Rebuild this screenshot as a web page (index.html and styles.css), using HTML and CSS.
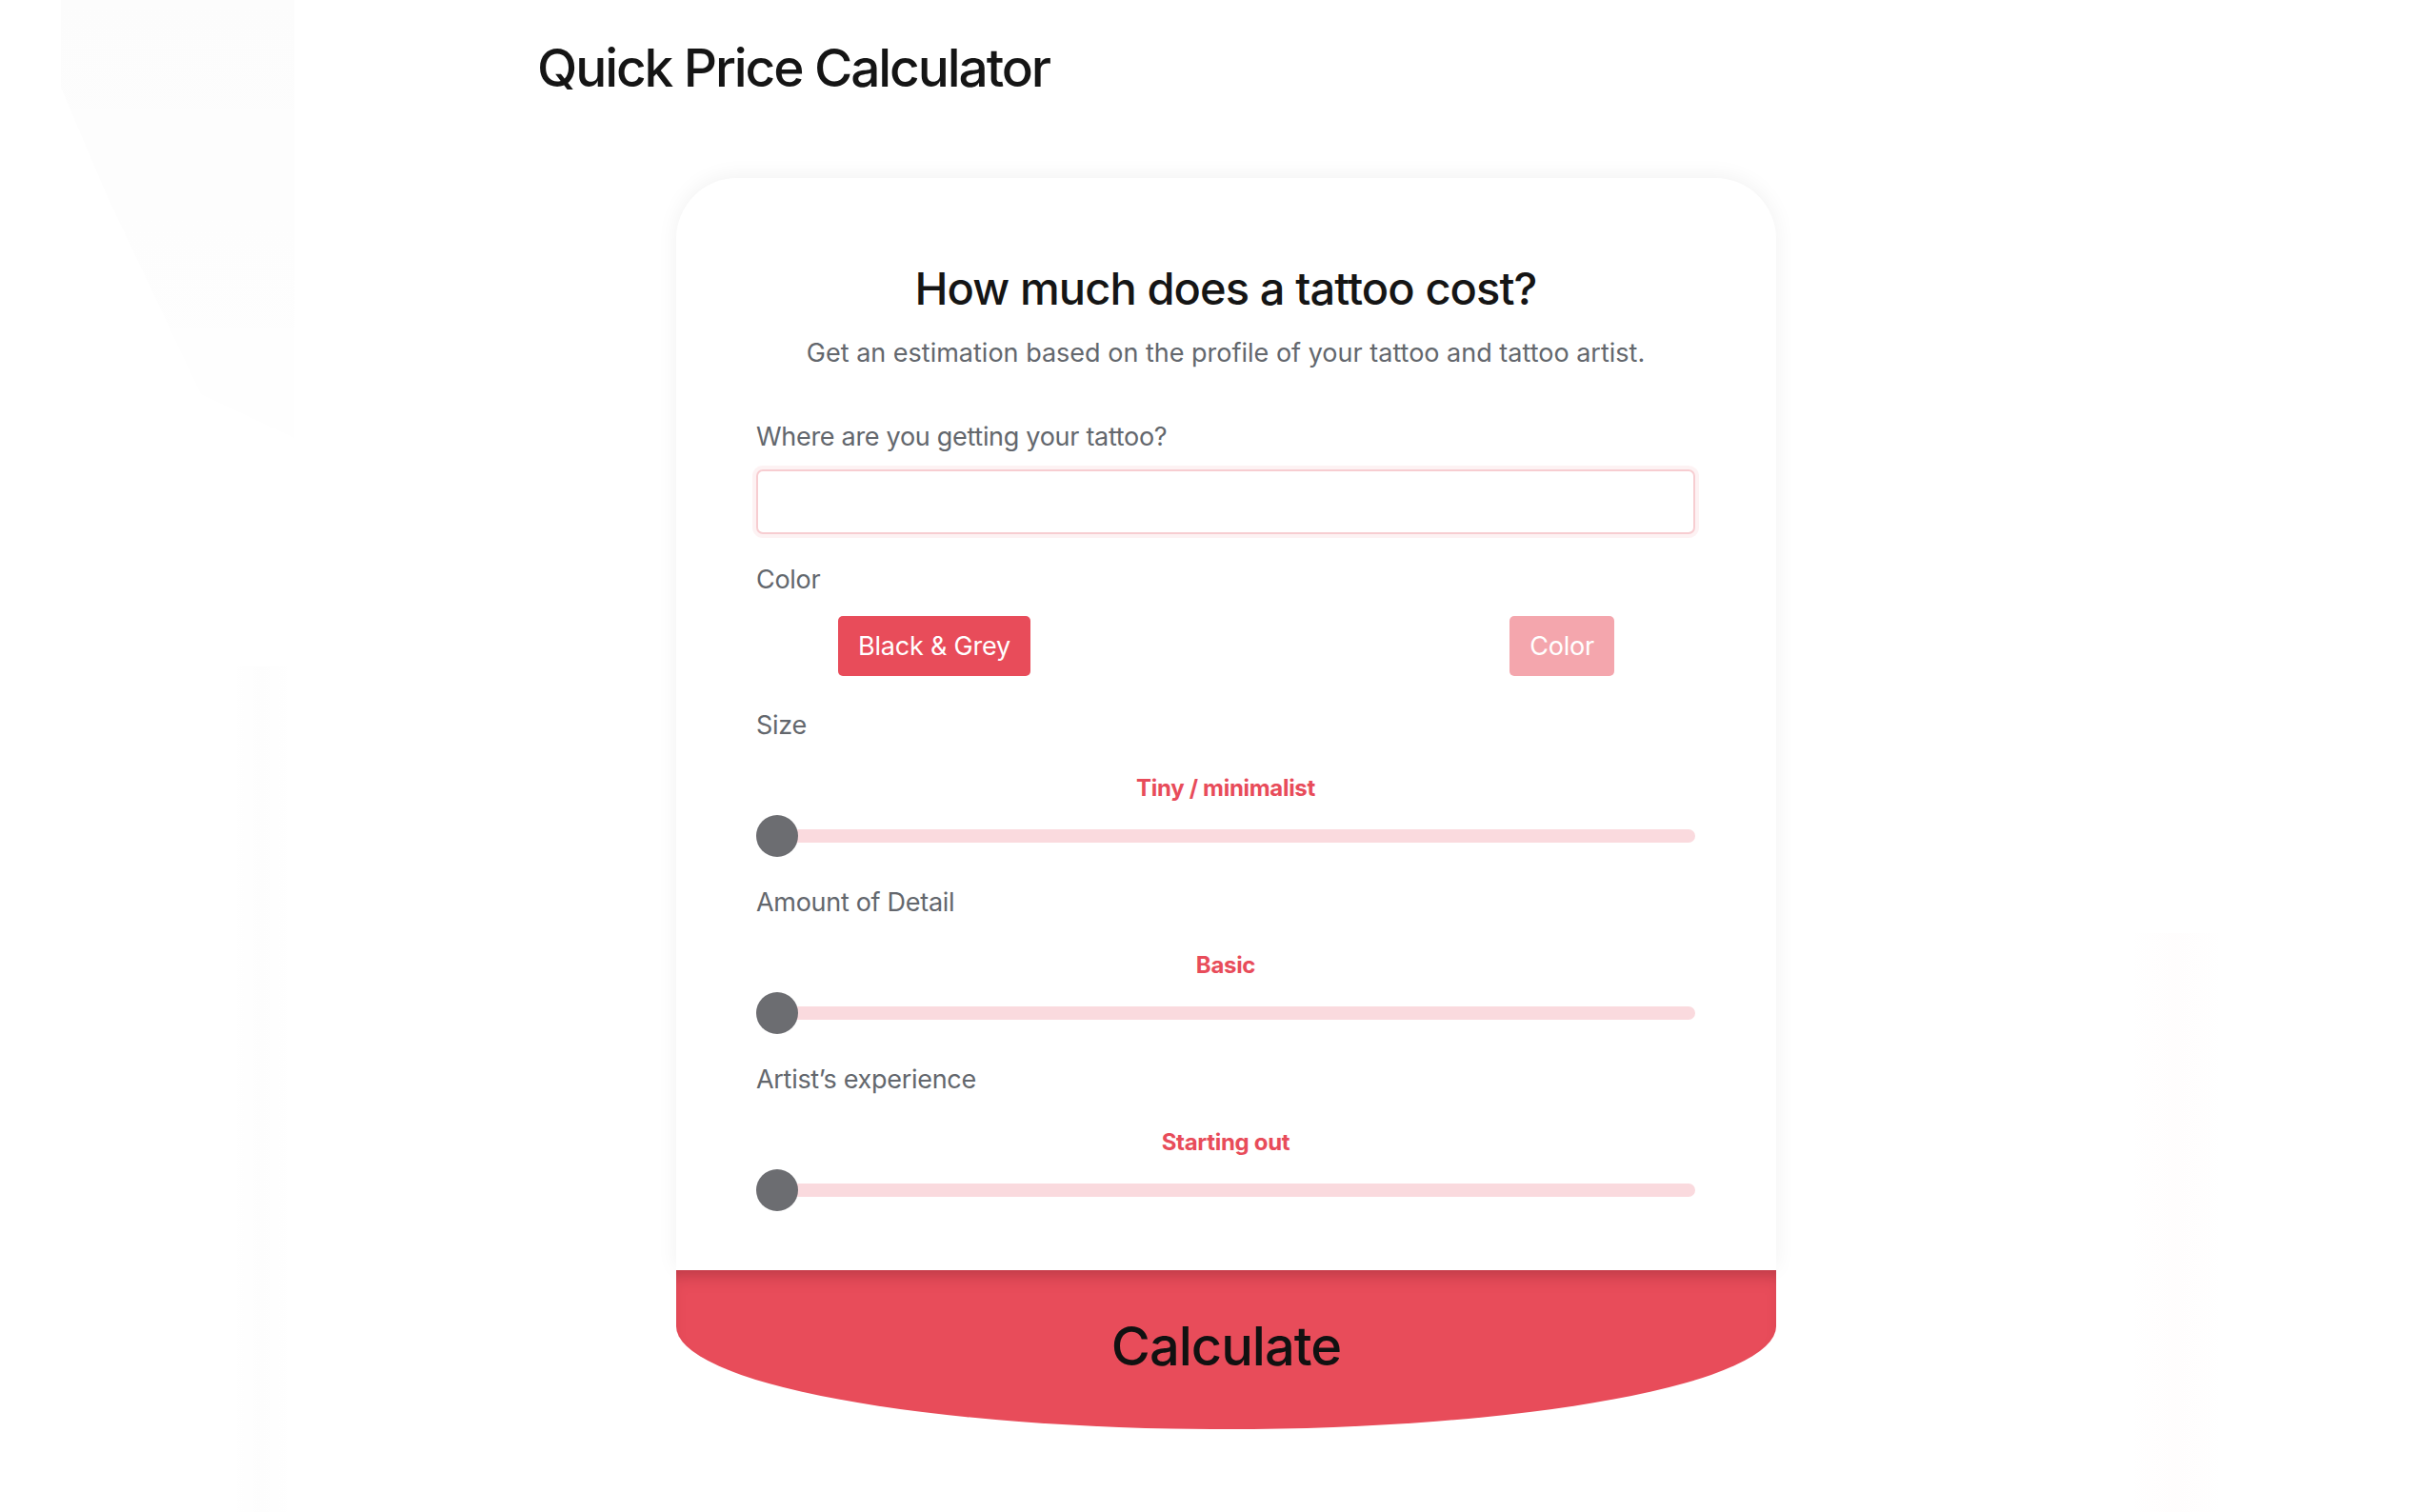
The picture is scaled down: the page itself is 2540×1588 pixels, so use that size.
FILE: index.html
```html
<!DOCTYPE html>
<html lang="en">
<head>
<meta charset="utf-8">
<title>Quick Price Calculator</title>
<link rel="stylesheet" href="styles.css">
</head>
<body>
<div class="deco deco-left"></div>
<div class="deco deco-left2"></div>
<div class="deco deco-right"></div>
<main class="page">
  <h1 class="page-title">Quick Price Calculator</h1>
  <section class="card">
    <div class="card-body">
      <h2 class="card-title">How much does a tattoo cost?</h2>
      <p class="card-sub">Get an estimation based on the profile of your tattoo and tattoo artist.</p>

      <label class="field-label first" for="where">Where are you getting your tattoo?</label>
      <input class="text-input" id="where" type="text">

      <div class="field-label">Color</div>
      <div class="choice-row">
        <button class="choice active" type="button">Black &amp; Grey</button>
        <button class="choice muted" type="button">Color</button>
      </div>

      <div class="field-label">Size</div>
      <div class="range-value">Tiny / minimalist</div>
      <input class="range" type="range" min="0" max="4" value="0">

      <div class="field-label">Amount of Detail</div>
      <div class="range-value">Basic</div>
      <input class="range" type="range" min="0" max="4" value="0">

      <div class="field-label">Artist’s experience</div>
      <div class="range-value">Starting out</div>
      <input class="range" type="range" min="0" max="4" value="0">
    </div>
    <button class="calc-btn" type="button">Calculate</button>
  </section>
</main>
</body>
</html>
```

FILE: styles.css
```css
html, body {
  margin: 0;
  padding: 0;
  background: #ffffff;
}

body {
  font-family: "Inter", "Liberation Sans", sans-serif;
  color: #1b1b1b;
  min-height: 1588px;
  position: relative;
  overflow: hidden;
}

.deco {
  position: absolute;
  pointer-events: none;
  z-index: 0;
}

.deco-left {
  left: 64px;
  top: 0;
  width: 245px;
  height: 460px;
  background: linear-gradient(180deg, rgba(0,0,0,0.01), rgba(0,0,0,0.002));
  clip-path: polygon(0 0, 100% 0, 100% 100%, 60% 90%, 20% 45%, 0 20%);
}

.deco-left2 {
  left: 240px;
  top: 700px;
  width: 70px;
  height: 888px;
  background: linear-gradient(90deg, rgba(0,0,0,0), rgba(0,0,0,0.008), rgba(0,0,0,0));
}

.deco-right {
  left: 2235px;
  top: 980px;
  width: 100px;
  height: 608px;
  background: linear-gradient(90deg, rgba(200,120,120,0), rgba(220,120,120,0.015), rgba(0,0,0,0));
}

.page {
  position: relative;
  z-index: 1;
  padding-bottom: 40px;
}

.page-title {
  margin: 37px 0 0 564px;
  font-size: 55px;
  line-height: 68px;
  font-weight: 500;
  letter-spacing: -2.1px;
  color: #151515;
}

.card {
  width: 1155px;
  margin: 82px 0 0 710px;
  display: flex;
  flex-direction: column;
}

.card-body {
  padding: 87px 85px 62px 84px;
  display: flex;
  flex-direction: column;
  background: #ffffff;
  border-radius: 64px 64px 0 0;
  box-shadow: 0 -2px 22px rgba(0, 0, 0, 0.06);
}

.card-title {
  margin: 0;
  text-align: center;
  font-size: 47px;
  line-height: 58px;
  font-weight: 500;
  letter-spacing: -0.9px;
  color: #151515;
}

.card-sub {
  margin: 21px 0 0;
  text-align: center;
  font-size: 27px;
  line-height: 36px;
  color: #63676d;
  letter-spacing: 0;
}

.field-label {
  display: block;
  margin-top: 30px;
  font-size: 27px;
  line-height: 36px;
  color: #63676d;
  letter-spacing: -0.3px;
}

.field-label.first {
  margin-top: 52px;
}

.text-input {
  margin-top: 16px;
  height: 68px;
  box-sizing: border-box;
  width: 100%;
  border: 2px solid #f7cdd1;
  border-radius: 7px;
  box-shadow: 0 0 0 4px rgba(232, 76, 90, 0.07);
  background: #fff;
  outline: none;
  font: inherit;
  font-size: 27px;
  padding: 0 16px;
}

.choice-row {
  margin-top: 20px;
  display: flex;
  justify-content: space-between;
  padding: 0 85px 0 86px;
}

.choice {
  height: 63px;
  padding: 0 21px;
  border: none;
  border-radius: 5px;
  background: #e84c5a;
  color: #ffffff;
  font-family: inherit;
  font-size: 27px;
  letter-spacing: -0.2px;
  cursor: pointer;
}

.choice.muted {
  background: #f4a6ad;
}

.field-label + .range-value {
  margin-top: 33px;
}

.range-value {
  text-align: center;
  font-size: 24px;
  line-height: 30px;
  font-weight: 700;
  color: #e84c5a;
  letter-spacing: -0.3px;
}

.choice-row + .field-label {
  margin-top: 34px;
}

.range {
  -webkit-appearance: none;
  appearance: none;
  margin: 13px 0 0;
  width: 100%;
  height: 44px;
  background: transparent;
  outline: none;
}

.range::-webkit-slider-runnable-track {
  height: 14px;
  border-radius: 7px;
  background: #fadade;
}

.range::-webkit-slider-thumb {
  -webkit-appearance: none;
  appearance: none;
  width: 44px;
  height: 44px;
  margin-top: -15px;
  border-radius: 50%;
  background: #6c6d71;
  border: none;
}

.calc-btn {
  height: 167px;
  width: 100%;
  border: none;
  background: #e84c5a;
  box-shadow: inset 0 14px 18px -10px rgba(90, 20, 30, 0.35);
  border-radius: 0 0 50% 50% / 0 0 108px 108px;
  font-family: inherit;
  font-size: 56px;
  font-weight: 500;
  letter-spacing: -1px;
  color: #111111;
  padding: 0 0 8px;
  cursor: pointer;
}
```
